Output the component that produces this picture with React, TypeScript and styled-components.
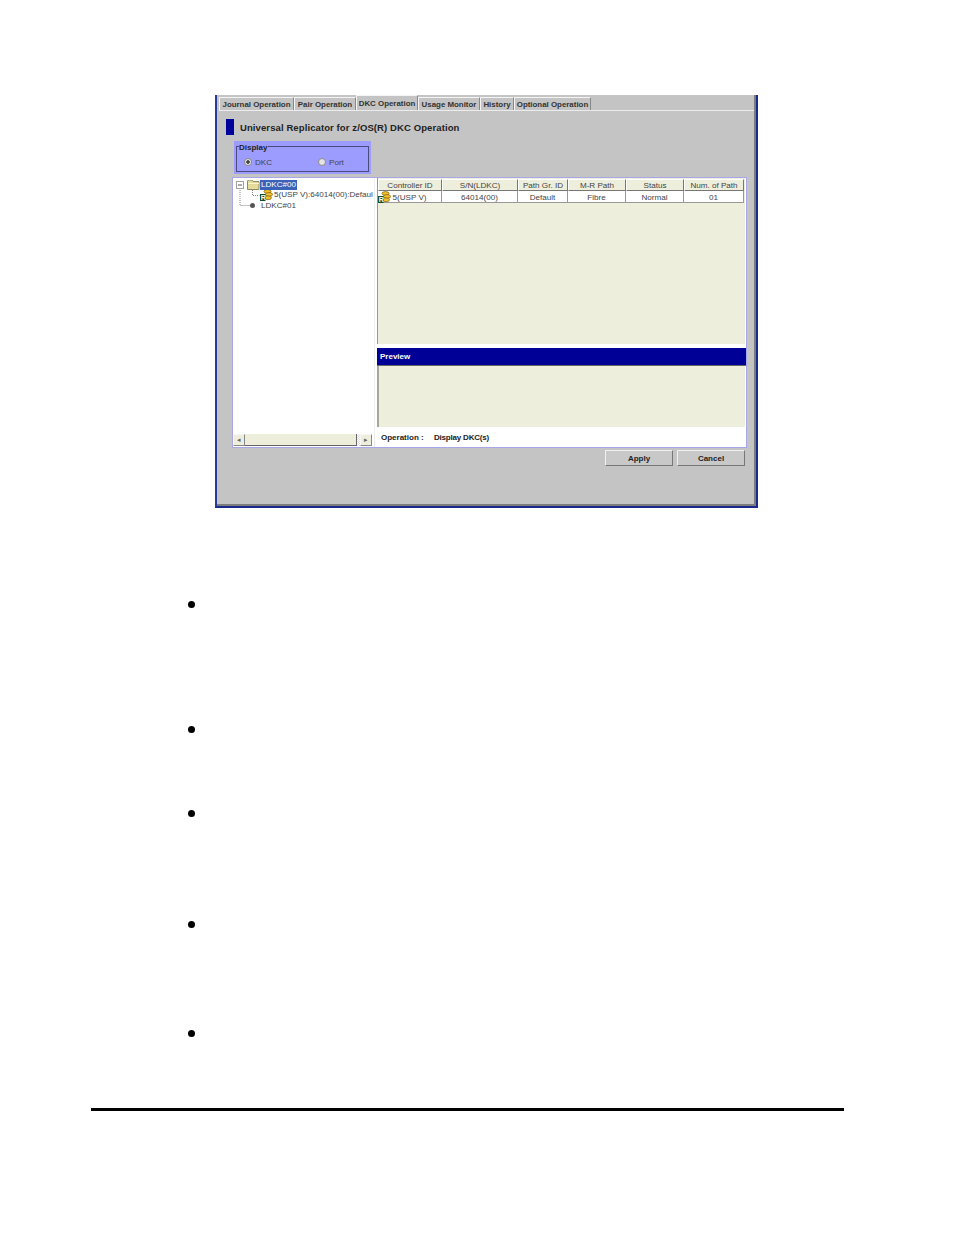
import React from "react";
import styled, { createGlobalStyle } from "styled-components";

const tabs = [
	{ label: "Journal Operation", width: 75 },
	{ label: "Pair Operation", width: 62 },
	{ label: "DKC Operation", width: 62, active: true },
	{ label: "Usage Monitor", width: 62 },
	{ label: "History", width: 34 },
	{ label: "Optional Operation", width: 77 },
];

const columns = [
	{ title: "Controller ID", value: "5(USP V)", icon: true },
	{ title: "S/N(LDKC)", value: "64014(00)" },
	{ title: "Path Gr. ID", value: "Default" },
	{ title: "M-R Path", value: "Fibre" },
	{ title: "Status", value: "Normal" },
	{ title: "Num. of Path", value: "01" },
];

const bullets = [125, 84, 111, 109, 76];

const DbIcon = () => (
	<DbSvg width="13" height="12" viewBox="0 0 13 12">
		<ellipse cx="7.500" cy="2.500" rx="3.500" ry="1.900" fill="#f2c22e" stroke="#7a5c10" strokeWidth="0.7" />
		<ellipse cx="9" cy="5.500" rx="3.500" ry="1.900" fill="#f2c22e" stroke="#7a5c10" strokeWidth="0.7" />
		<ellipse cx="8" cy="8.800" rx="3.500" ry="1.900" fill="#f2c22e" stroke="#7a5c10" strokeWidth="0.7" />
		<rect x="0" y="5" width="5.500" height="7" fill="#0c4c28" />
		<text x="0.700" y="11" fontSize="7" fontWeight="bold" fontFamily="Liberation Sans" fill="#fff">
			R
		</text>
	</DbSvg>
);

const App = () => (
	<Page>
		<GlobalStyle />
		<Window>
			<TabRow>
				{tabs.map((tab) => (
					<Tab key={tab.label} $width={tab.width} $active={tab.active}>
						{tab.label}
					</Tab>
				))}
			</TabRow>
			<TitleRow>
				<TitleMark />
				<Title>Universal Replicator for z/OS(R) DKC Operation</Title>
			</TitleRow>
			<DisplayBox>
				<DisplayGroup>
					<DisplayLegend>Display</DisplayLegend>
					<RadioOption $width={74}>
						<Radio $checked />
						DKC
					</RadioOption>
					<RadioOption>
						<Radio />
						Port
					</RadioOption>
				</DisplayGroup>
			</DisplayBox>
			<Split>
				<TreePanel>
					<Tree>
						<TreeRow>
							<GutterSvg width="27" height="11" viewBox="0 0 27 11">
								<rect x="3.500" y="2.500" width="7" height="7" fill="#fff" stroke="#a0a0a0" />
								<path d="M5 6h4" stroke="#555" />
								<path d="M14.500 10.500V2l1-1h3.500l1 1.500h6v8z" fill="#e6dc9a" stroke="#8d8a6a" />
								<path d="M15 4.500h11" stroke="#faf4cc" />
							</GutterSvg>
							<TreeLabel $selected>LDKC#00</TreeLabel>
						</TreeRow>
						<TreeRow>
							<GutterSvg width="27" height="11" viewBox="0 0 27 11">
								<path d="M7 0v11M19.500 0v5.500h7" stroke="#888" strokeDasharray="1 1" fill="none" />
							</GutterSvg>
							<DbIcon />
							<TreeLabel>5(USP V):64014(00):Defaul</TreeLabel>
						</TreeRow>
						<TreeRow>
							<GutterSvg width="27" height="11" viewBox="0 0 27 11">
								<path d="M7 0v5.500h10" stroke="#888" strokeDasharray="1 1" fill="none" />
								<circle cx="19.500" cy="5.500" r="2.500" fill="#555" />
							</GutterSvg>
							<TreeLabel>LDKC#01</TreeLabel>
						</TreeRow>
					</Tree>
					<ScrollBar>
						<ScrollButton>◂</ScrollButton>
						<ScrollThumb />
						<ScrollTrack />
						<ScrollButton>▸</ScrollButton>
					</ScrollBar>
				</TreePanel>
				<RightPanel>
					<TableArea>
						<Table>
							{columns.map((column) => (
								<HeaderCell key={column.title}>{column.title}</HeaderCell>
							))}
							{columns.map((column) => (
								<BodyCell key={column.title}>
									{column.icon && (
										<RowIcon>
											<DbIcon />
										</RowIcon>
									)}
									{column.value}
								</BodyCell>
							))}
						</Table>
					</TableArea>
					<PreviewBar>Preview</PreviewBar>
					<PreviewBody />
					<OperationRow>
						<OperationLabel>Operation :</OperationLabel>
						<OperationValue>Display DKC(s)</OperationValue>
					</OperationRow>
				</RightPanel>
			</Split>
			<ButtonRow>
				<ActionButton>Apply</ActionButton>
				<ActionButton>Cancel</ActionButton>
			</ButtonRow>
		</Window>
		<BulletList>
			{bullets.map((height, index) => (
				<BulletItem key={index} $height={height}>
					<Dot />
				</BulletItem>
			))}
		</BulletList>
		<Rule />
	</Page>
);
export default App;

// Styled Components
const GlobalStyle = createGlobalStyle`
	html, body {
		margin: 0;
		background: #fff;
	}
`;

const Page = styled.div`
	width: 954px;
	height: 1235px;
	box-sizing: border-box;
	padding-top: 95px;
	overflow: hidden;
	font-family: "Liberation Sans", Arial, sans-serif;
	font-size: 8.100px;
	color: #222;
`;

const Window = styled.div`
	width: 543px;
	height: 413px;
	box-sizing: border-box;
	margin-left: 215px;
	padding: 2px 0 0 2px;
	background: #c4c4c4;
	border-left: 2px solid #2a3a9c;
	border-right: 2px solid #1a2a8c;
	border-bottom: 2px solid #1a2a8c;
	box-shadow: inset -2px -2px 0 #7c7c7c;
`;

const TabRow = styled.div`
	display: flex;
	height: 13px;
	margin-right: 2px;
	border-bottom: 1px solid #ececec;
`;

const Tab = styled.div<{ $width: number; $active?: boolean }>`
	width: ${(p) => p.$width}px;
	height: ${(p) => (p.$active ? 15 : 13)}px;
	margin-top: ${(p) => (p.$active ? -2 : 0)}px;
	box-sizing: border-box;
	display: flex;
	align-items: center;
	justify-content: center;
	font-size: 7.900px;
	font-weight: bold;
	white-space: nowrap;
	color: #333;
	background: #c4c4c4;
	border-top: 1px solid #f4f4f4;
	border-left: 1px solid #f4f4f4;
	border-right: 1px solid #888;
	position: relative;
	z-index: ${(p) => (p.$active ? 1 : 0)};
`;

const TitleRow = styled.div`
	display: flex;
	align-items: center;
	gap: 6px;
	margin: 8px 0 0 7px;
	height: 16px;
`;

const TitleMark = styled.div`
	width: 8px;
	height: 16px;
	background: #00009c;
`;

const Title = styled.div`
	font-size: 9.500px;
	font-weight: bold;
	letter-spacing: 0.1px;
	color: #222;
	white-space: nowrap;
`;

const DisplayBox = styled.div`
	width: 137px;
	height: 33px;
	box-sizing: border-box;
	margin: 6px 0 0 15px;
	padding: 5px 2px 2px;
	background: #9c9cff;
`;

const DisplayGroup = styled.div`
	position: relative;
	height: 26px;
	box-sizing: border-box;
	display: flex;
	align-items: center;
	padding: 6px 0 0 7px;
	border: 1px solid #4a4a80;
`;

const DisplayLegend = styled.span`
	position: absolute;
	top: -4px;
	left: 2px;
	padding-right: 1px;
	background: #9c9cff;
	font-size: 8px;
	font-weight: bold;
	color: #222;
`;

const RadioOption = styled.div<{ $width?: number }>`
	display: flex;
	align-items: center;
	gap: 3px;
	width: ${(p) => (p.$width ? `${p.$width}px` : "auto")};
	color: #444;
`;

const Radio = styled.span<{ $checked?: boolean }>`
	width: 8px;
	height: 8px;
	box-sizing: border-box;
	border-radius: 50%;
	background: ${(p) =>
		p.$checked
			? "radial-gradient(circle, #444 0 1.5px, #e4e4e4 2px)"
			: "#e4e4e4"};
	border: 1px solid #8a8a8a;
`;

const Split = styled.div`
	display: flex;
	width: 515px;
	height: 271px;
	box-sizing: border-box;
	margin: 3px 0 0 13px;
	background: #fff;
	border: 1px solid #a8a8e8;
	gap: 2px;
`;

const TreePanel = styled.div`
	width: 142px;
	box-sizing: border-box;
	display: flex;
	flex-direction: column;
	justify-content: space-between;
	background: #fff;
	border-right: 1px solid #eee;
`;

const Tree = styled.div`
	padding-top: 1.500px;
`;

const TreeRow = styled.div`
	display: flex;
	align-items: center;
	height: 10.500px;
	white-space: nowrap;
	overflow: hidden;
	color: #444;
`;

const GutterSvg = styled.svg`
	flex-shrink: 0;
`;

const DbSvg = styled.svg`
	flex-shrink: 0;
`;

const TreeLabel = styled.span<{ $selected?: boolean }>`
	padding: 0 1px;
	line-height: 10px;
	background: ${(p) => (p.$selected ? "#3a62b8" : "transparent")};
	color: ${(p) => (p.$selected ? "#fff" : "#444")};
`;

const ScrollBar = styled.div`
	display: flex;
	align-items: stretch;
	height: 12px;
	margin: 0 2px 1px 0;
`;

const ScrollButton = styled.div`
	width: 12px;
	display: flex;
	align-items: center;
	justify-content: center;
	box-sizing: border-box;
	font-size: 7px;
	color: #666;
	background: #eeeedd;
	border: 1px solid #f8f8f8;
	border-right-color: #888;
	border-bottom-color: #888;
`;

const ScrollThumb = styled.div`
	flex: 1;
	background: #eeeedd;
	border-right: 1px solid #666;
	border-bottom: 1px solid #666;
`;

const ScrollTrack = styled.div`
	width: 3px;
	background: repeating-conic-gradient(#ddd 0 25%, #fff 0 50%) 0 0 / 2px 2px;
`;

const RightPanel = styled.div`
	flex: 1;
	display: flex;
	flex-direction: column;
	background: #fff;
`;

const TableArea = styled.div`
	height: 166px;
	box-sizing: border-box;
	background: #eeeedd;
	border-left: 1px solid #9a9a8a;
	margin-right: 1px;
`;

const Table = styled.div`
	display: grid;
	grid-template-columns: 64px 76px 50px 58px 58px 60px;
	grid-auto-rows: 12px;
	padding-top: 1px;
`;

const HeaderCell = styled.div`
	display: flex;
	align-items: center;
	justify-content: center;
	box-sizing: border-box;
	color: #444;
	background: #eeeedd;
	border-top: 1px solid #fff;
	border-left: 1px solid #fff;
	border-right: 1px solid #777;
	border-bottom: 1px solid #777;
`;

const BodyCell = styled.div`
	position: relative;
	display: flex;
	align-items: center;
	justify-content: center;
	box-sizing: border-box;
	padding-top: 1px;
	color: #444;
	background: #fff;
	border-right: 1px solid #999;
	border-bottom: 1px solid #999;
`;

const RowIcon = styled.span`
	position: absolute;
	left: 0;
	top: 0;
	line-height: 0;
`;

const PreviewBar = styled.div`
	height: 18px;
	margin-top: 4px;
	box-sizing: border-box;
	display: flex;
	align-items: center;
	padding-left: 3px;
	font-size: 8px;
	font-weight: bold;
	color: #fff;
	background: #000096;
	border-bottom: 1px solid #666;
`;

const PreviewBody = styled.div`
	height: 61px;
	background: #eeeedd;
	border-left: 2px solid #a8a898;
	margin-right: 1px;
`;

const OperationRow = styled.div`
	flex: 1;
	display: flex;
	align-items: center;
	padding-left: 4px;
	font-size: 8px;
	font-weight: bold;
	color: #222;
`;

const OperationLabel = styled.span`
	width: 53px;
`;

const OperationValue = styled.span`
	letter-spacing: -0.2px;
`;

const ButtonRow = styled.div`
	display: flex;
	justify-content: flex-end;
	gap: 4px;
	margin: 2px 11px 0 0;
`;

const ActionButton = styled.div`
	width: 68px;
	height: 16px;
	box-sizing: border-box;
	display: flex;
	align-items: center;
	justify-content: center;
	font-size: 8px;
	font-weight: bold;
	color: #222;
	background: #c8c8c8;
	border-top: 1px solid #f0f0f0;
	border-left: 1px solid #f0f0f0;
	border-right: 1px solid #777;
	border-bottom: 1px solid #777;
`;

const BulletList = styled.div`
	margin-top: 93px;
	padding-left: 188px;
`;

const BulletItem = styled.div<{ $height: number }>`
	height: ${(p) => p.$height}px;
`;

const Dot = styled.div`
	width: 7px;
	height: 7px;
	border-radius: 50%;
	background: #000;
`;

const Rule = styled.div`
	width: 753px;
	height: 3px;
	margin: 2px 0 0 91px;
	background: #000;
`;
